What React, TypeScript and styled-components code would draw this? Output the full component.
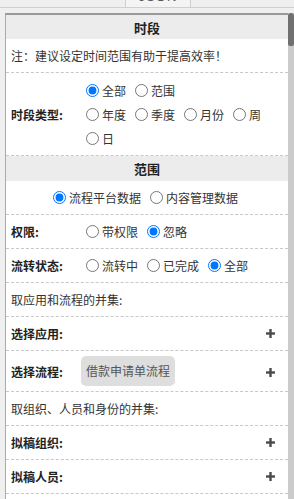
import React from 'react';
import styled, { createGlobalStyle } from 'styled-components';

const GlobalStyle = createGlobalStyle`
  html, body {
    margin: 0;
    padding: 0;
    background: #efefef;
    overflow: hidden;
    font-family: "Noto Sans CJK SC", "Liberation Sans", sans-serif;
    font-size: 12px;
    color: #333;
  }
`;

const Page = styled.div`
  height: 499px;
  display: flex;
  flex-direction: column;
`;

const TabBar = styled.div`
  height: 7px;
  border-bottom: 1px solid #cfcfcf;
  display: flex;
  overflow: hidden;
  flex-shrink: 0;
`;

const Tab = styled.div`
  margin-left: 125px;
  width: 64px;
  height: 7px;
  border-left: 1px solid #cfcfcf;
  border-right: 1px solid #cfcfcf;
  background: #f4f4f4;
  display: flex;
  align-items: flex-end;
  justify-content: center;
`;

const TabText = styled.span`
  font-family: "Liberation Sans", sans-serif;
  font-size: 13px;
  line-height: 14px;
  color: #555;
  margin-bottom: 3px;
  letter-spacing: 1px;
`;

const Body = styled.div`
  flex: 1;
  display: flex;
  padding: 5px 0 0 5px;
  min-height: 0;
`;

const Panel = styled.div`
  flex: 1;
  background: #fff;
  border-top: 2px solid #999;
  border-left: 1px solid #aaa;
  overflow: hidden;
`;

const ScrollTrack = styled.div`
  width: 6px;
  background: #cbcbcb;
  flex-shrink: 0;
`;

const ScrollThumb = styled.div`
  height: 33px;
  background: #707070;
  border-radius: 3px 3px 2px 2px;
`;

const SectionHeader = styled.div<{ $h: number }>`
  height: ${({ $h }) => $h}px;
  background: #ececec;
  display: flex;
  align-items: center;
  justify-content: center;
  font-weight: bold;
  font-size: 13px;
  color: #222;
`;

const Row = styled.div<{ $pad?: number; $center?: boolean }>`
  display: flex;
  align-items: center;
  justify-content: ${({ $center }) => ($center ? 'center' : 'flex-start')};
  min-height: 34px;
  box-sizing: border-box;
  padding: ${({ $pad = 0 }) => $pad}px 13px ${({ $pad = 0 }) => $pad}px 5px;
  border-bottom: 1px dashed #c8c8c8;
`;

const Label = styled.div`
  width: 70px;
  flex-shrink: 0;
  font-weight: bold;
  color: #222;
`;

const Text = styled.div`
  color: #333;
`;

const Options = styled.div<{ $fit?: boolean }>`
  flex: ${({ $fit }) => ($fit ? 'none' : '1')};
  display: flex;
  flex-wrap: wrap;
  column-gap: 4px;
`;

const Break = styled.div`
  flex-basis: 100%;
  height: 0;
`;

const Option = styled.label`
  display: inline-flex;
  align-items: center;
  height: 24px;
  color: #333;
  white-space: nowrap;

  input {
    margin: 0 3px 0 5px;
    width: 13px;
    height: 13px;
  }
`;

const Chip = styled.div`
  height: 30px;
  line-height: 30px;
  padding: 0 5px;
  border-radius: 5px;
  background: #dedede;
  color: #555;
`;

const PlusBox = styled.div<{ $top?: boolean }>`
  margin-left: auto;
  display: flex;
  align-self: ${({ $top }) => ($top ? 'flex-start' : 'center')};
  margin-top: ${({ $top }) => ($top ? 12 : 0)}px;
`;

const Plus = ({ top }: { top?: boolean }) => (
  <PlusBox $top={top}>
    <svg width="9" height="9" viewBox="0 0 9 9">
      <rect x="3.3" y="0" width="2.4" height="9" fill="#4a4a4a" />
      <rect x="0" y="3.3" width="9" height="2.4" fill="#4a4a4a" />
    </svg>
  </PlusBox>
);

type Opt = { label: string; checked?: boolean };

const Radio = ({ name, opt }: { name: string; opt: Opt }) => (
  <Option>
    <input type="radio" name={name} defaultChecked={!!opt.checked} />
    {opt.label}
  </Option>
);

const periodTypes: Opt[] = [
  { label: '年度' },
  { label: '季度' },
  { label: '月份' },
  { label: '周' },
  { label: '日' },
];

export default function App() {
  return (
    <Page>
      <GlobalStyle />
      <TabBar>
        <Tab>
          <TabText>JSON</TabText>
        </Tab>
      </TabBar>
      <Body>
        <Panel>
          <SectionHeader $h={24}>时段</SectionHeader>
          <Row>
            <Text>注：建议设定时间范围有助于提高效率！</Text>
          </Row>
          <Row $pad={5}>
            <Label>时段类型:</Label>
            <Options>
              <Radio name="period" opt={{ label: '全部', checked: true }} />
              <Radio name="period" opt={{ label: '范围' }} />
              <Break />
              {periodTypes.map((o) => (
                <Radio key={o.label} name="period" opt={o} />
              ))}
            </Options>
          </Row>
          <SectionHeader $h={25}>范围</SectionHeader>
          <Row $center>
            <Options $fit>
              <Radio name="source" opt={{ label: '流程平台数据', checked: true }} />
              <Radio name="source" opt={{ label: '内容管理数据' }} />
            </Options>
          </Row>
          <Row>
            <Label>权限:</Label>
            <Options>
              <Radio name="perm" opt={{ label: '带权限' }} />
              <Radio name="perm" opt={{ label: '忽略', checked: true }} />
            </Options>
          </Row>
          <Row>
            <Label>流转状态:</Label>
            <Options>
              <Radio name="state" opt={{ label: '流转中' }} />
              <Radio name="state" opt={{ label: '已完成' }} />
              <Radio name="state" opt={{ label: '全部', checked: true }} />
            </Options>
          </Row>
          <Row>
            <Text>取应用和流程的并集:</Text>
          </Row>
          <Row>
            <Label>选择应用:</Label>
            <Plus />
          </Row>
          <Row $pad={5}>
            <Label>选择流程:</Label>
            <Chip>借款申请单流程</Chip>
            <Plus top />
          </Row>
          <Row>
            <Text>取组织、人员和身份的并集:</Text>
          </Row>
          <Row>
            <Label>拟稿组织:</Label>
            <Plus />
          </Row>
          <Row>
            <Label>拟稿人员:</Label>
            <Plus />
          </Row>
        </Panel>
        <ScrollTrack>
          <ScrollThumb />
        </ScrollTrack>
      </Body>
    </Page>
  );
}
